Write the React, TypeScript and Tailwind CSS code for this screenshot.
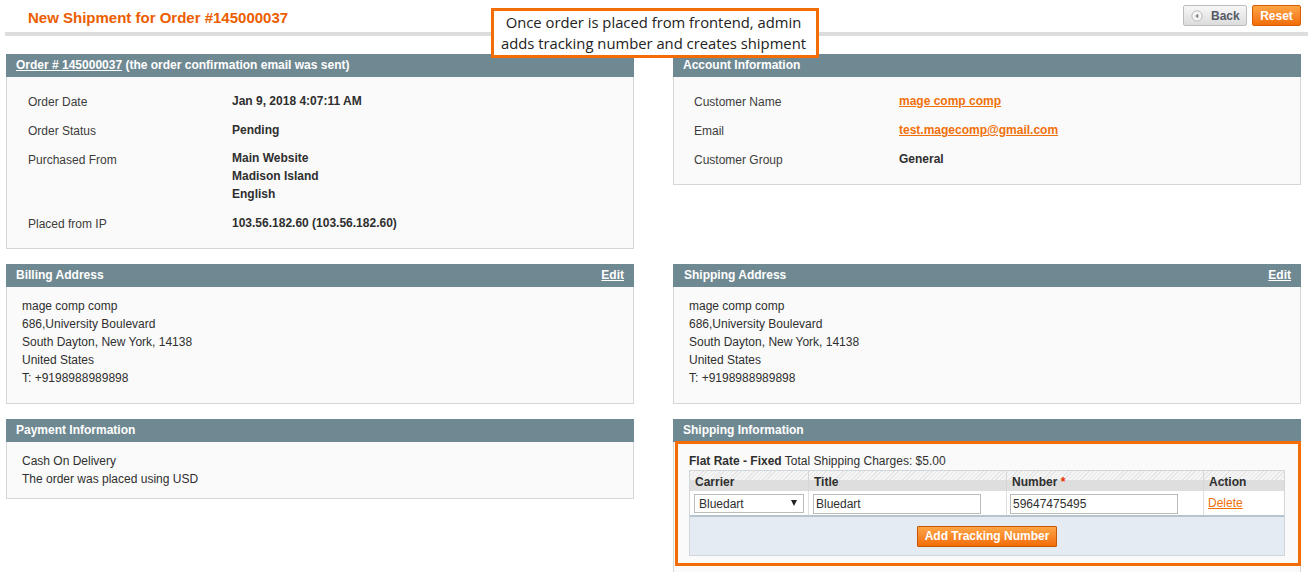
import React from "react";

function Panel({ title, edit, titleClass = "", className = "", children }: { title: React.ReactNode; edit?: boolean; titleClass?: string; className?: string; children: React.ReactNode }) {
  return (
    <section className={`flex flex-col ${className}`}>
      <div className="flex h-[23px] items-start justify-between bg-[#6f8992] pl-[10px] pr-[10px] text-[12px] font-bold leading-[22px] text-white">
        <div className={titleClass}>{title}</div>
        {edit && <a className="underline">Edit</a>}
      </div>
      <div className="flex-1 border border-t-0 border-[#d6d6d6] bg-[#fafafa]">{children}</div>
    </section>
  );
}

function Info({ label, children, link, wide }: { label: string; children: React.ReactNode; link?: boolean; wide?: boolean }) {
  return (
    <div className={wide ? "grid grid-cols-[205px_1fr] pb-[10px]" : "grid grid-cols-[204px_1fr] pb-[10px]"}>
      <div className="pt-[1px] text-[#3c3c3c]">{label}</div>
      <div className={link ? "font-bold text-[#f0700a] underline" : "font-bold text-[#2f2f2f]"}>{children}</div>
    </div>
  );
}

function Address() {
  return (
    <div className="pl-[15px] pt-[10px] text-[#2f2f2f]">
      <div>mage comp comp</div>
      <div>686,University Boulevard</div>
      <div>South Dayton, New York, 14138</div>
      <div>United States</div>
      <div>T: +9198988989898</div>
    </div>
  );
}

export default function App() {
  return (
    <div className="relative h-[572px] w-[1308px] overflow-hidden bg-white font-['Liberation_Sans',Arial,sans-serif] text-[12px] leading-[18px]">
      <header className="ml-[5px] flex h-[36px] items-start justify-between border-b-[4px] border-[#dddddd] pr-[7px] pt-[5px]">
        <h1 className="ml-[23px] pt-[4px] text-[15px] font-bold leading-[18px] text-[#eb5e00]">New Shipment for Order #145000037</h1>
        <div className="flex gap-[5px]">
          <button className="flex h-[21px] w-[64px] items-center gap-[8px] rounded-[2px] border border-[#bdbdbd] bg-gradient-to-b from-[#f7f7f7] to-[#dcdcdc] pl-[7px] text-[12px] font-bold text-[#555b66]">
            <svg width="12" height="12" viewBox="0 0 12 12">
              <circle cx="6" cy="6" r="5.2" fill="#f4f4f4" stroke="#bdbdbd" />
              <path d="M7.2 3.8v4.4L4.4 6z" fill="#777" />
            </svg>
            Back
          </button>
          <button className="h-[21px] w-[49px] rounded-[2px] border border-[#d85d00] bg-gradient-to-b from-[#fda544] to-[#f26c00] text-[12px] font-bold text-white">Reset</button>
        </div>
      </header>

      <main className="grid grid-cols-[628px_628px] gap-x-[39px] gap-y-[15px] pl-[6px] pt-[18px]">
        <Panel title={<span><span className="underline">Order # 145000037</span> (the order confirmation email was sent)</span>} className="h-[195px]">
          <div className="pl-[21px] pt-[15px]">
            <Info label="Order Date">Jan 9, 2018 4:07:11 AM</Info>
            <Info label="Order Status">Pending</Info>
            <Info label="Purchased From">
              <div className="-mt-[1px]">Main Website</div>
              <div>Madison Island</div>
              <div className="pb-[1px]">English</div>
            </Info>
            <Info label="Placed from IP">103.56.182.60 (103.56.182.60)</Info>
          </div>
        </Panel>

        <div className="h-[195px]">
          <Panel title="Account Information" className="h-[131px]">
            <div className="pl-[20px] pt-[15px]">
              <Info wide label="Customer Name" link>mage comp comp</Info>
              <Info wide label="Email" link>test.magecomp@gmail.com</Info>
              <Info wide label="Customer Group">General</Info>
            </div>
          </Panel>
        </div>

        <Panel title="Billing Address" edit className="h-[140px]"><Address /></Panel>
        <Panel title="Shipping Address" titleClass="pl-[1px]" edit className="h-[140px]"><Address /></Panel>

        <Panel title="Payment Information" className="h-[80px]">
          <div className="pl-[15px] pt-[10px] text-[#2f2f2f]">
            <div>Cash On Delivery</div>
            <div>The order was placed using USD</div>
          </div>
        </Panel>

        <Panel title="Shipping Information" className="h-[170px]">
          <div className="relative px-[15px] pt-[10px]">
            <div className="text-[#2f2f2f]"><b>Flat Rate - Fixed</b> Total Shipping Charges: $5.00</div>
            <div className="border border-[#d0d6d9]">
              <div className="grid h-[20px] grid-cols-[119px_198px_197px_1fr] bg-[linear-gradient(to_bottom,transparent_0,transparent_9px,#dedede_9px,#dedede_20px),repeating-linear-gradient(135deg,#e6e6e6_0,#e6e6e6_1px,#f5f5f5_1px,#f5f5f5_3px)] font-bold text-[#2f2f2f]">
                <div className="border-r border-[#d6d6d6] pl-[5px] leading-[22px]">Carrier</div>
                <div className="border-r border-[#d6d6d6] pl-[5px] leading-[22px]">Title</div>
                <div className="border-r border-[#d6d6d6] pl-[5px] leading-[22px]">Number <span className="text-[#eb2e00]">*</span></div>
                <div className="pl-[5px] leading-[22px]">Action</div>
              </div>
              <div className="grid h-[26px] grid-cols-[119px_198px_197px_1fr] border-b-[2px] border-[#b6c4cf] bg-white">
                <div className="relative border-r border-[#e0e0e0] pl-[4px] pt-[3px]">
                  <select className="h-[19px] w-[110px] appearance-none border border-[#bbbbbb] bg-white pl-[4px] text-[12px] text-[#2f2f2f]">
                    <option>Bluedart</option>
                  </select>
                  <svg className="absolute left-[101px] top-[9px]" width="6" height="6" viewBox="0 0 6 6"><path d="M0 0h6L3 6z" fill="#222" /></svg>
                </div>
                <div className="border-r border-[#e0e0e0] pl-[4px] pt-[3px]">
                  <input readOnly value="Bluedart" className="h-[20px] w-[168px] border border-[#bbbbbb] bg-white pl-[2px] text-[12px] text-[#2f2f2f]" />
                </div>
                <div className="border-r border-[#e0e0e0] pl-[3px] pt-[3px]">
                  <input readOnly value="59647475495" className="h-[20px] w-[168px] border border-[#bbbbbb] bg-white pl-[2px] text-[12px] text-[#2f2f2f]" />
                </div>
                <div className="pl-[4px] pt-[3px]"><a className="text-[#f0700a] underline">Delete</a></div>
              </div>
              <div className="flex h-[38px] items-center justify-center bg-[#e4ebf2]">
                <button className="h-[21px] w-[140px] rounded-[1px] border border-[#c85600] bg-gradient-to-b from-[#fda544] to-[#f26c00] text-[12px] font-bold text-white">Add Tracking Number</button>
              </div>
            </div>
            <div className="absolute left-[1px] top-[-1px] h-[125px] w-[626px] border-[3px] border-[#f36c06]" />
          </div>
        </Panel>
      </main>

      <div className="absolute left-[491px] top-[8px] h-[50px] w-[328px] border-[3px] border-[#f36c06] bg-white pr-[3px] pt-[1px] text-center font-['Open_Sans',sans-serif] text-[14.8px] leading-[21px] text-[#222]">
        <div>Once order is placed from frontend, admin</div>
        <div>adds tracking number and creates shipment</div>
      </div>
    </div>
  );
}
